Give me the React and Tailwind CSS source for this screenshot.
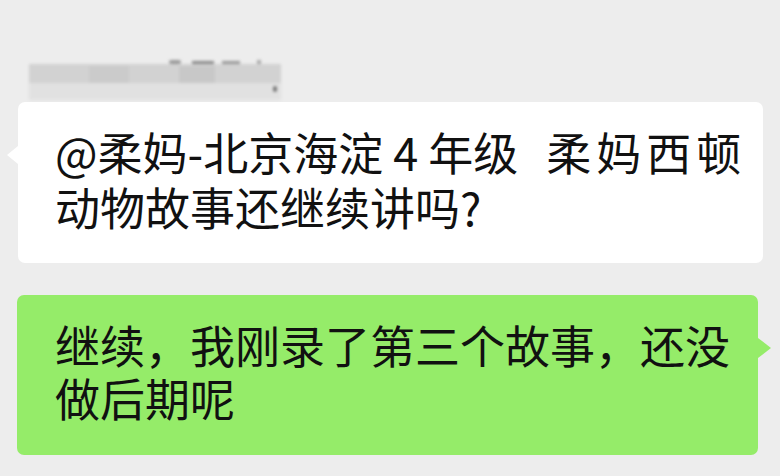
export default function App() {
  const font = { fontFamily: '"Noto Sans CJK SC", "Noto Sans", sans-serif' };

  return (
    <div className="w-[780px] h-[476px] bg-[#ededed] overflow-hidden flex flex-col" style={font}>
      {/* blurred nickname */}
      <svg className="ml-[29px] mt-[58px] blur-[1.5px]" width="256" height="42" viewBox="0 0 256 42">
        <rect x="0" y="6" width="252" height="19" fill="#d2d2d2" />
        <rect x="0" y="25" width="252" height="17" fill="#e1e1e1" />
        <rect x="60" y="8" width="40" height="17" fill="#cbcbcb" />
        <rect x="150" y="8" width="36" height="17" fill="#c8c8c8" />
        <rect x="140" y="2" width="12" height="4" rx="2" fill="#9a9a9a" />
        <rect x="163" y="3" width="22" height="3" fill="#8a8a8a" />
        <rect x="193" y="3" width="18" height="3" fill="#999" />
        <rect x="228" y="2" width="4" height="4" fill="#aaa" />
        <rect x="244" y="28" width="4" height="6" rx="2" fill="#777" />
      </svg>

      {/* incoming message */}
      <div className="relative ml-[18px] mt-[2px] w-[745px] h-[161px] bg-white rounded-[7px] pl-[37px] pt-[22px] text-[45px] leading-[55px] text-[#111]">
        <div className="absolute left-[-11px] top-[44px] w-0 h-0 border-y-[9px] border-y-transparent border-r-[11px] border-r-white" />
        <div className="whitespace-nowrap flex">
          <span>@柔妈-北京海淀 4 年级</span>
          <span className="ml-[28px] tracking-[5px]">柔妈西顿</span>
        </div>
        <div className="whitespace-nowrap">动物故事还继续讲吗?</div>
      </div>

      {/* outgoing message */}
      <div className="relative ml-[17px] mt-[32px] w-[741px] h-[160px] bg-[#95ec69] rounded-[7px] pl-[38px] pt-[23px] text-[45px] leading-[53px] text-[#111]">
        <div className="absolute right-[-13px] top-[43px] w-0 h-0 border-y-[10px] border-y-transparent border-l-[13px] border-l-[#95ec69]" />
        <div className="whitespace-nowrap">继续，我刚录了第三个故事，还没</div>
        <div className="whitespace-nowrap">做后期呢</div>
      </div>
    </div>
  );
}
